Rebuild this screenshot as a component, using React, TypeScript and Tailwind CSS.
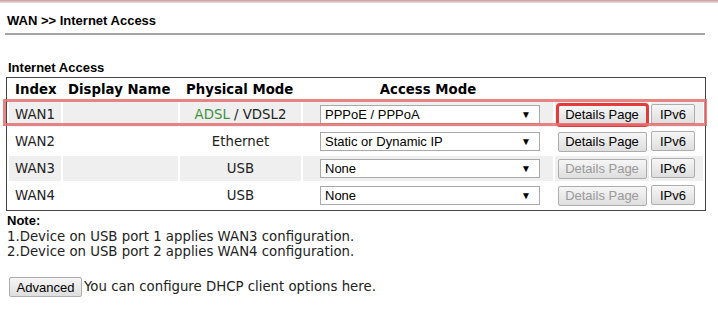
import React from "react";

type Row = {
  index: string;
  physical: React.ReactNode;
  mode: string;
  detailsEnabled: boolean;
  shaded: boolean;
};

const rows: Row[] = [
  {
    index: "WAN1",
    physical: (
      <>
        <span className="text-[#3f8f3f]">ADSL</span> / VDSL2
      </>
    ),
    mode: "PPPoE / PPPoA",
    detailsEnabled: true,
    shaded: true,
  },
  { index: "WAN2", physical: "Ethernet", mode: "Static or Dynamic IP", detailsEnabled: true, shaded: false },
  { index: "WAN3", physical: "USB", mode: "None", detailsEnabled: false, shaded: true },
  { index: "WAN4", physical: "USB", mode: "None", detailsEnabled: false, shaded: false },
];

const btn =
  "h-[20px] border border-[#adadad] rounded-[2px] bg-gradient-to-b from-[#f6f6f6] to-[#dedede] font-['Liberation_Sans',Arial,sans-serif] text-[13px] leading-none";

const Select = ({ value }: { value: string }) => (
  <div className="ml-[17px] w-[220px] h-[19px] border border-[#a9a9a9] bg-white flex items-center justify-between pl-[4px] pr-[8px] font-['Liberation_Sans',Arial,sans-serif] text-[13px] text-black">
    <span>{value}</span>
    <span className="text-[10px]">▼</span>
  </div>
);

export default function App() {
  return (
    <div className="w-[718px] h-[313px] bg-white text-[#222] overflow-hidden">
      <div className="h-[3px] bg-gradient-to-b from-[#c79a9a] to-[#f3e1e1]" />

      {/* Title */}
      <div className="pl-[7px] pt-[8px] h-[30px] font-['Liberation_Sans',Arial,sans-serif] font-bold text-[13px] text-black">
        WAN &gt;&gt; Internet Access
      </div>
      <div className="ml-[5px] w-[700px] border-t-2 border-[#a5a5a5]" />

      <div className="pl-[8px] pt-[25px] h-[43px] font-['Liberation_Sans',Arial,sans-serif] font-bold text-[13px] leading-[15px] text-black">
        Internet Access
      </div>

      {/* Table */}
      <div className="relative ml-[6px] -mt-[1px] w-[700px]">
        <table className="w-[700px] border border-[#444] border-separate border-spacing-[2px] table-fixed font-['DejaVu_Sans',Verdana,sans-serif] text-[13.3px]">
          <colgroup>
            <col className="w-[52px]" />
            <col className="w-[115px]" />
            <col className="w-[121px]" />
            <col className="w-[250px]" />
            <col className="w-[94px]" />
            <col className="w-[52px]" />
          </colgroup>
          <thead>
            <tr className="h-[20px] font-bold text-black">
              <th className="text-left pl-[6px] p-0">Index</th>
              <th className="text-left pl-[5px] p-0 whitespace-nowrap">Display Name</th>
              <th className="text-left pl-[6px] p-0 whitespace-nowrap">Physical Mode</th>
              <th className="text-center p-0">Access Mode</th>
              <th className="p-0" />
              <th className="p-0" />
            </tr>
          </thead>
          <tbody>
            {rows.map((r) => {
              const bg = r.shaded ? "bg-[#efefef]" : "bg-white";
              return (
                <tr key={r.index} className="h-[25px]">
                  <td className={`${bg} pl-[6px] p-0`}>{r.index}</td>
                  <td className={`${bg} p-0`} />
                  <td className={`${bg} text-center p-0 whitespace-nowrap`}>{r.physical}</td>
                  <td className={`${bg} p-0`}>
                    <Select value={r.mode} />
                  </td>
                  <td className={`${bg} p-0`}>
                    <div className="flex justify-center">
                      <button
                        className={`${btn} w-[89px] ${r.detailsEnabled ? "text-black" : "text-[#9a9a9a]"} ${
                          r.index === "WAN1" ? "outline-[3px] outline-solid outline-[#e23b3b] -outline-offset-1" : ""
                        }`}
                      >
                        Details Page
                      </button>
                    </div>
                  </td>
                  <td className={`${bg} p-0`}>
                    <button className={`${btn} w-[44px] text-black`}>IPv6</button>
                  </td>
                </tr>
              );
            })}
          </tbody>
        </table>
        {/* highlight around the WAN1 row */}
        <div className="absolute left-[-3px] top-[22px] w-[704px] h-[27px] border-[3px] border-[#e46f6f]/85 pointer-events-none" />
      </div>

      {/* Notes */}
      <div className="pl-[7px] pt-[2px]">
        <div className="font-['Liberation_Sans',Arial,sans-serif] font-bold text-[13px] leading-[16px] text-black">
          Note:
        </div>
        <div className="font-['DejaVu_Sans',Verdana,sans-serif] text-[13.3px] leading-[15px]">
          <div>1.Device on USB port 1 applies WAN3 configuration.</div>
          <div>2.Device on USB port 2 applies WAN4 configuration.</div>
        </div>
      </div>

      <div className="flex items-center pl-[9px] pt-[18px]">
        <button className={`${btn} w-[73px] text-black`}>Advanced</button>
        <span className="ml-[2px] font-['DejaVu_Sans',Verdana,sans-serif] text-[13.3px]">
          You can configure DHCP client options here.
        </span>
      </div>
    </div>
  );
}
